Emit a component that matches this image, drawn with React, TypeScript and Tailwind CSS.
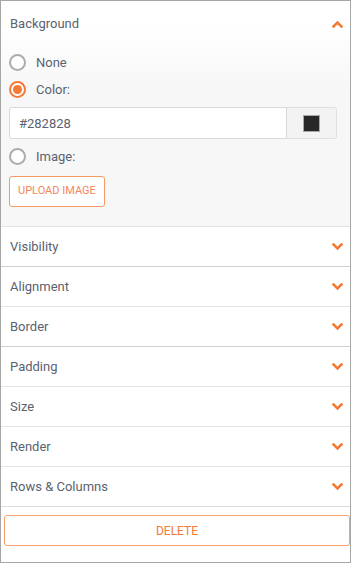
import React from "react";

const sections = [
  { label: "Visibility", dark: false },
  { label: "Alignment", dark: true },
  { label: "Border", dark: false },
  { label: "Padding", dark: true },
  { label: "Size", dark: false },
  { label: "Render", dark: false },
  { label: "Rows & Columns", dark: false },
];

function Chevron({ up = false }: { up?: boolean }) {
  return (
    <svg width="11" height="8" viewBox="0 0 11 8" className="shrink-0">
      <polyline
        points={up ? "1.5,6.5 5.5,2.5 9.5,6.5" : "1.5,1.5 5.5,5.5 9.5,1.5"}
        fill="none"
        stroke="#f47a35"
        strokeWidth="2.6"
        strokeLinecap="square"
      />
    </svg>
  );
}

function Radio({ checked, label }: { checked?: boolean; label: string }) {
  return (
    <label className="flex h-[27px] items-center gap-[10px]">
      {checked ? (
        <span className="flex h-[17px] w-[17px] items-center justify-center rounded-full border-2 border-[#f47a35] bg-white">
          <span className="h-[9px] w-[9px] rounded-full bg-[#f47a35]" />
        </span>
      ) : (
        <span className="h-[17px] w-[17px] rounded-full border-2 border-[#acacac] bg-white" />
      )}
      <span className="text-[13px] text-[#5b6270]">{label}</span>
    </label>
  );
}

export default function App() {
  return (
    <div className="h-[563px] w-[351px] bg-white" style={{ fontFamily: "Roboto, 'Liberation Sans', sans-serif" }}>
      <div className="flex h-full flex-col border border-[#a6a6a6]">
        {/* Background (expanded) */}
        <section className="bg-gradient-to-b from-white from-10% to-[#f7f7f7] to-40%">
          <header className="flex h-[45px] items-center justify-between pl-[9px] pr-[7px]">
            <span className="text-[13px] text-[#5b6270]">Background</span>
            <Chevron up />
          </header>
          <div className="pb-[19px] pl-[8px] pr-[13px] pt-[3px]">
            <Radio label="None" />
            <Radio checked label="Color:" />
            <div className="mt-[4px] flex h-[32px]">
              <input
                readOnly
                value="#282828"
                className="h-full min-w-0 flex-1 rounded-l-[3px] border border-[#d9d9d9] bg-white px-[9px] text-[13px] text-[#5b6270] outline-none"
              />
              <button className="flex h-full w-[50px] items-center justify-center rounded-r-[3px] border border-l-0 border-[#e0e0e0] bg-[#f3f3f3]">
                <span className="h-[17px] w-[17px] border border-[#a9a9a9] bg-[#282828]" />
              </button>
            </div>
            <div className="mt-[4px]">
              <Radio label="Image:" />
            </div>
            <button className="mt-[6px] h-[31px] rounded-[3px] border border-[#f59a62] bg-white px-[8px] text-[11px] text-[#f4865a]">
              UPLOAD IMAGE
            </button>
          </div>
        </section>

        {sections.map((s) => (
          <div
            key={s.label}
            className={`flex h-[40px] items-center justify-between border-t pl-[9px] pr-[7px] ${
              s.dark ? "border-[#cfcfcf]" : "border-[#e3e3e3]"
            }`}
          >
            <span className="text-[13px] text-[#5b6270]">{s.label}</span>
            <Chevron />
          </div>
        ))}

        <div className="border-t border-[#dcdcdc] pl-[3px] pt-[8px]">
          <button className="h-[31px] w-full rounded-[3px] border border-[#f6a06c] bg-white text-[12px] text-[#f47a35]">
            DELETE
          </button>
        </div>
      </div>
    </div>
  );
}
